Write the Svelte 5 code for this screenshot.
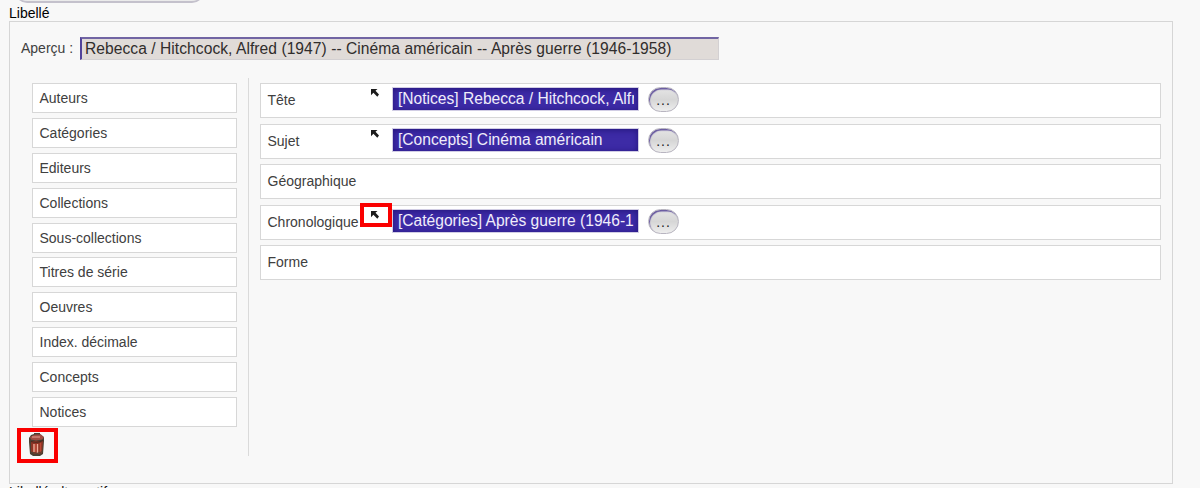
<script>
  const sources = ['Auteurs', 'Catégories', 'Editeurs', 'Collections', 'Sous-collections', 'Titres de série', 'Oeuvres', 'Index. décimale', 'Concepts', 'Notices'];
  const rows = [
    { label: 'Tête', value: '[Notices] Rebecca / Hitchcock, Alfred (1947)' },
    { label: 'Sujet', value: '[Concepts] Cinéma américain' },
    { label: 'Géographique' },
    { label: 'Chronologique', value: '[Catégories] Après guerre (1946-1958)', marked: true },
    { label: 'Forme' }
  ];
</script>

<div class="page">
  <div class="previous"></div>
  <div class="title">Libellé</div>
  <section class="panel">
    <div class="preview">
      <span class="preview-label">Aperçu :</span>
      <div class="preview-field"><span>Rebecca / Hitchcock, Alfred (1947) -- Cinéma américain -- Après guerre (1946-1958)</span></div>
    </div>
    <div class="columns">
      <div class="side">
        <div class="sources">
          {#each sources as s}
            <div class="source">{s}</div>
          {/each}
        </div>
        <div class="trash">
          <svg width="18" height="24" viewBox="0 0 18 24">
            <path d="M1 6 3 3 6 2V1h6v1l4 3v4l-1 13-3 2H5l-3-2L1 10Z" fill="#4a4033" />
            <path d="M2 5 7 2.5h6l3 3-2 2-6 1-5-1Z" fill="#a34c42" />
            <path d="M4 5h8" stroke="#d18678" stroke-width="1.5" />
            <path d="M3 9h12l-1 12-3 1H6l-3-2Z" fill="#8e3525" />
            <path d="M3 9.5q6 2 12-1" stroke="#4a2a20" fill="none" stroke-width="1.1" />
            <path d="M6 12v8M9.5 12v9" stroke="#efad98" stroke-width="1.4" />
            <path d="M7.7 12v8M12.5 11v9" stroke="#bc4634" stroke-width="1.4" />
            <path d="M3 20q6 3 12-1" stroke="#514637" fill="none" />
          </svg>
        </div>
      </div>
      <div class="rows">
        {#each rows as r}
          <div class="row">
            <span class="label">{r.label}</span>
            {#if r.value}
              <span class="arrow" class:marked={r.marked}>
                <svg width="8" height="8" viewBox="0 0 8 8"><path d="M0 0h6.5L4.5 1.7 8 5.6 6.3 7.8 2.4 3.7 0 6.2Z" fill="#1c1c1c" /></svg>
              </span>
              <div class="value"><span>{r.value}</span></div>
              <button>...</button>
            {/if}
          </div>
        {/each}
      </div>
    </div>
  </section>
  <div class="next">Libellé alternatif</div>
</div>

<style>
  .page { box-sizing: border-box; height: 488px; overflow: hidden; background: #f8f8f8; padding-left: 9px; font-family: "Liberation Sans", Arial, sans-serif; color: #404040; font-size: 14px; }
  .previous { box-sizing: border-box; width: 189px; height: 24px; margin: -21px 0 0 6px; border: 1px solid #bebac9; border-bottom: 2px solid #c4c1cc; border-radius: 12px; background: #ebebeb; }
  .title { height: 18px; line-height: 21px; color: #000; }
  .panel { box-sizing: border-box; width: 1164px; height: 463px; border: 1px solid #d6d6d6; padding: 15px 11px 0; }
  .preview { display: flex; height: 24px; }
  .preview-label { width: 59px; flex: none; line-height: 23px; white-space: nowrap; }
  .preview-field { box-sizing: border-box; width: 639px; height: 23px; border: 1px solid #d3d0d2; border-top: 2px solid #7165a3; border-left: 2px solid #51439b; background: #e0dbd8; color: #302d2c; font-size: 15.6px; line-height: 20px; padding-left: 3px; white-space: nowrap; overflow: hidden; }
  .preview-field span { letter-spacing: 0.05px; }
  .columns { display: flex; margin-top: 17px; height: 378px; }
  .side { box-sizing: border-box; width: 228px; border-right: 1px solid #dadada; padding: 5px 0 0 11px; }
  .sources { display: grid; grid-template-rows: repeat(10, 30px); row-gap: 4.9px; width: 205px; }
  .source { box-sizing: border-box; border: 1px solid #d7d7d7; background: #fff; padding-left: 6.5px; line-height: 28px; }
  .trash { box-sizing: border-box; width: 41px; height: 35px; border: 4px solid #fa0000; margin: 1px 0 0 -15px; padding: 0 0 0 7px; }
  svg { display: block; }
  .rows { display: grid; grid-template-rows: repeat(5, 35px); row-gap: 5.5px; width: 901px; padding: 5px 0 0 11px; }
  .row { box-sizing: border-box; display: flex; border: 1px solid #d7d7d7; background: #fff; padding-left: 6.5px; }
  .label { width: 92.5px; flex: none; line-height: 33px; }
  .arrow { box-sizing: border-box; width: 32px; height: 24px; flex: none; margin: -3px 0 0 0; padding: 8px 0 0 11px; }
  .marked { border: 4px solid #fa0000; padding: 4px 0 0 7px; }
  .value { box-sizing: border-box; width: 247px; height: 24px; flex: none; margin: 3px 9px 0 0; border: 1px solid #d1cde4; background: #3d2ba6; box-shadow: inset 0 1px 6px #24157a; color: #f0edfa; padding: 0 4px 0 5px; font-size: 15.6px; line-height: 22px; }
  .value span { display: block; overflow: hidden; white-space: nowrap; }
  button { box-sizing: border-box; width: 31px; height: 25px; flex: none; margin-top: 3px; padding: 1px 0 0; border: 1px solid #b8b5c0; border-radius: 13px; background: linear-gradient(#e5e5e5, #d6d6d6 50%, #ededed); box-shadow: inset 1px 1.5px 1px #66579f; font: 14px "Liberation Sans", sans-serif; letter-spacing: 1px; line-height: 18px; color: #222; }
  .next { line-height: 15px; padding-top: 1px; color: #111; }
</style>
